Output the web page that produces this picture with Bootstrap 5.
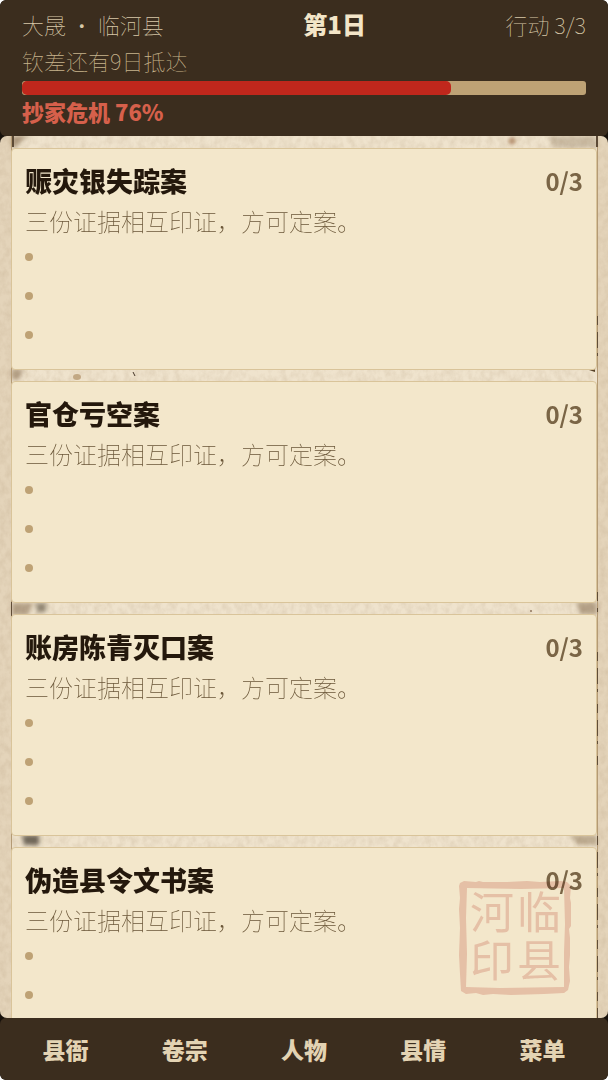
<!DOCTYPE html>
<html lang="zh-CN">
<head>
<meta charset="utf-8">
<meta name="viewport" content="width=device-width, initial-scale=1">
<title>临河县 · 卷宗</title>
<link href="https://cdn.jsdelivr.net/npm/bootstrap@5.3.0/dist/css/bootstrap.min.css" rel="stylesheet">
<style>
  body { background: #fff; font-family: "Noto Sans CJK SC", sans-serif; }
  .game { background: #17110b; border-radius: 6px; }
  .hud, .dock { background: #3b2d1e; border-radius: 6px; }
  .hud { padding: 7px 22px 9px; color: #f3e5c8; font-size: 22px; line-height: 34px; }
  .hud-thin { font-weight: 100; color: #d8c8a8; }
  .hud-day { font-size: 24px; font-weight: 900; }
  .hud-eta { line-height: 38px; font-weight: 100; color: #c8b48c; margin-bottom: 2px; }
  .crisis { height: 14px; background: #bea275; border-radius: 3px; }
  .crisis .progress-bar { background: #c0271c; border-radius: 5px; }
  .crisis-label { font-weight: 900; color: #d6604b; line-height: 32px; }
  .desk { background: #e4d4ba; border-radius: 7px; min-height: 0; }
  .paper { position: absolute; inset: 0; width: 100%; height: 100%; }
  .files { padding: 12px 11px 0 11px; gap: 11px; position: relative; }
  .dossier { background: #f3e7cb; border: 1px solid #d9c49a; border-radius: 4px; padding: 12px 13px 30px; }
  .dossier-name { font-size: 27px; font-weight: 900; line-height: 40px; color: #24180c; margin: 0; }
  .dossier-count { font-size: 24px; font-weight: 700; line-height: 40px; color: #7a6546; }
  .dossier-note { font-size: 24px; font-weight: 100; line-height: 40px; color: #6a5638; margin: 0 0 12px; }
  .clues { gap: 31px; margin: 0; }
  .clues li { width: 8px; height: 8px; border-radius: 50%; background: #bea275; }
  .seal { position: absolute; right: 36px; bottom: 24px; width: 114px; height: 114px; opacity: .22; pointer-events: none; mix-blend-mode: multiply; }
  .dock { padding: 12px 6px; }
  .dock button { flex: 1 1 0; background: none; border: 0; padding: 0; font-size: 23px; font-weight: 900; line-height: 38px; color: #e3d3b3; }
</style>
</head>
<body>
<div class="game vh-100 d-flex flex-column overflow-hidden">
  <header class="hud">
    <div class="d-flex justify-content-between">
      <div class="hud-thin">大晟 · 临河县</div>
      <div class="hud-day">第1日</div>
      <div class="hud-thin">行动 3/3</div>
    </div>
    <div class="hud-eta">钦差还有9日抵达</div>
    <div class="progress crisis" role="progressbar" aria-label="抄家危机" aria-valuenow="76" aria-valuemin="0" aria-valuemax="100">
      <div class="progress-bar" style="width:76%"></div>
    </div>
    <div class="crisis-label">抄家危机 76%</div>
  </header>

  <main class="desk flex-grow-1 position-relative overflow-hidden">
    <svg class="paper" viewBox="0 0 608 882" preserveAspectRatio="none" aria-hidden="true">
      <defs>
        <filter id="fibre" x="0" y="0" width="100%" height="100%">
          <feTurbulence type="fractalNoise" baseFrequency=".16 .12" numOctaves="4" seed="8"/>
          <feColorMatrix values="0 0 0 0 .45  0 0 0 0 .33  0 0 0 0 .2  .4 0 0 0 -.13"/>
        </filter>
        <filter id="soft" x="-50%" y="-50%" width="200%" height="200%"><feGaussianBlur stdDeviation="2"/></filter>
      </defs>
      <rect x="12" width="585" height="882" fill="#efe3cd"/>
      <rect width="608" height="882" filter="url(#fibre)"/>
      <g filter="url(#soft)" fill="#8d7558">
        <path d="M12 0h19l-9 4-7 8h-3z" opacity=".7"/>
        <circle cx="512" cy="5" r="3" fill="#8e5930" opacity=".8"/>
        <path d="M548 0h49v12h-43z" opacity=".35"/>
        <path d="M12 233h12l-5 11h-7z" opacity=".6"/>
        <path d="M12 467h22l-7 12H12z" opacity=".6"/>
        <path d="M36 467h10v9h-9z" fill="#6b5f50" opacity=".7"/>
        <path d="M576 466h21v12h-17z" opacity=".6"/>
        <path d="M22 699h17v10H24z" fill="#534a3e" opacity=".8"/>
        <path d="M570 699h27v10h-19z" opacity=".5"/>
      </g>
      <ellipse cx="77" cy="241" rx="4" ry="3" fill="#c2a884"/>
      <path d="M133 236l2 4" stroke="#443629"/>
      <path d="M530 475h2" stroke="#624029"/>
      <path d="M589 234l6-1v3z" fill="#574228"/>
      <path d="M11.500 0v882M597.500 0v882" stroke="#b49a74"/>
      <path d="M13 0v11M597 0v11" stroke="#5c4a36" stroke-width="2"/>
      <path d="M11.500 450v30M597.500 180v52M597.500 456v20M597.500 516v120M597.500 700v182" stroke="#4c3b29" stroke-dasharray="9 7 16 5 3 12" opacity=".8"/>
    </svg>

    <div class="files d-flex flex-column">
      <section class="dossier">
        <div class="d-flex justify-content-between"><h2 class="dossier-name">赈灾银失踪案</h2><span class="dossier-count">0/3</span></div>
        <p class="dossier-note">三份证据相互印证，方可定案。</p>
        <ul class="clues list-unstyled d-flex flex-column"><li></li><li></li><li></li></ul>
      </section>
      <section class="dossier">
        <div class="d-flex justify-content-between"><h2 class="dossier-name">官仓亏空案</h2><span class="dossier-count">0/3</span></div>
        <p class="dossier-note">三份证据相互印证，方可定案。</p>
        <ul class="clues list-unstyled d-flex flex-column"><li></li><li></li><li></li></ul>
      </section>
      <section class="dossier">
        <div class="d-flex justify-content-between"><h2 class="dossier-name">账房陈青灭口案</h2><span class="dossier-count">0/3</span></div>
        <p class="dossier-note">三份证据相互印证，方可定案。</p>
        <ul class="clues list-unstyled d-flex flex-column"><li></li><li></li><li></li></ul>
      </section>
      <section class="dossier">
        <div class="d-flex justify-content-between"><h2 class="dossier-name">伪造县令文书案</h2><span class="dossier-count">0/3</span></div>
        <p class="dossier-note">三份证据相互印证，方可定案。</p>
        <ul class="clues list-unstyled d-flex flex-column"><li></li><li></li><li></li></ul>
      </section>
    </div>

    <svg class="seal overflow-visible" viewBox="0 0 114 114" role="img" aria-label="临河县印">
      <path fill="#c0392b" fill-rule="evenodd" d="M2 3l4-2 12 1 3-1 4 1h24l20-1 13 1 21-1 6 1 4 4-1 12 1 5v23l-2 3 1 9v17l-1 12 1 14-2 9-4 3-20 1-33 1-18-1-10 1-7-2-10 1-5-3-1-17-1-19 1-27-1-19 1-11-1-12zM9 8L8 38l1 36-1 33 34 1 64-1V72l1-28-1-36-43 1z"/>
      <g fill="#c0392b" font-size="44" font-weight="400" text-anchor="middle">
        <text x="34" y="49">河</text><text x="81" y="49">临</text>
        <text x="34" y="97">印</text><text x="81" y="97">县</text>
      </g>
    </svg>
  </main>

  <nav class="dock d-flex" aria-label="主导航">
    <button type="button">县衙</button>
    <button type="button">卷宗</button>
    <button type="button">人物</button>
    <button type="button">县情</button>
    <button type="button">菜单</button>
  </nav>
</div>
<script src="https://cdn.jsdelivr.net/npm/bootstrap@5.3.0/dist/js/bootstrap.bundle.min.js"></script>
</body>
</html>
